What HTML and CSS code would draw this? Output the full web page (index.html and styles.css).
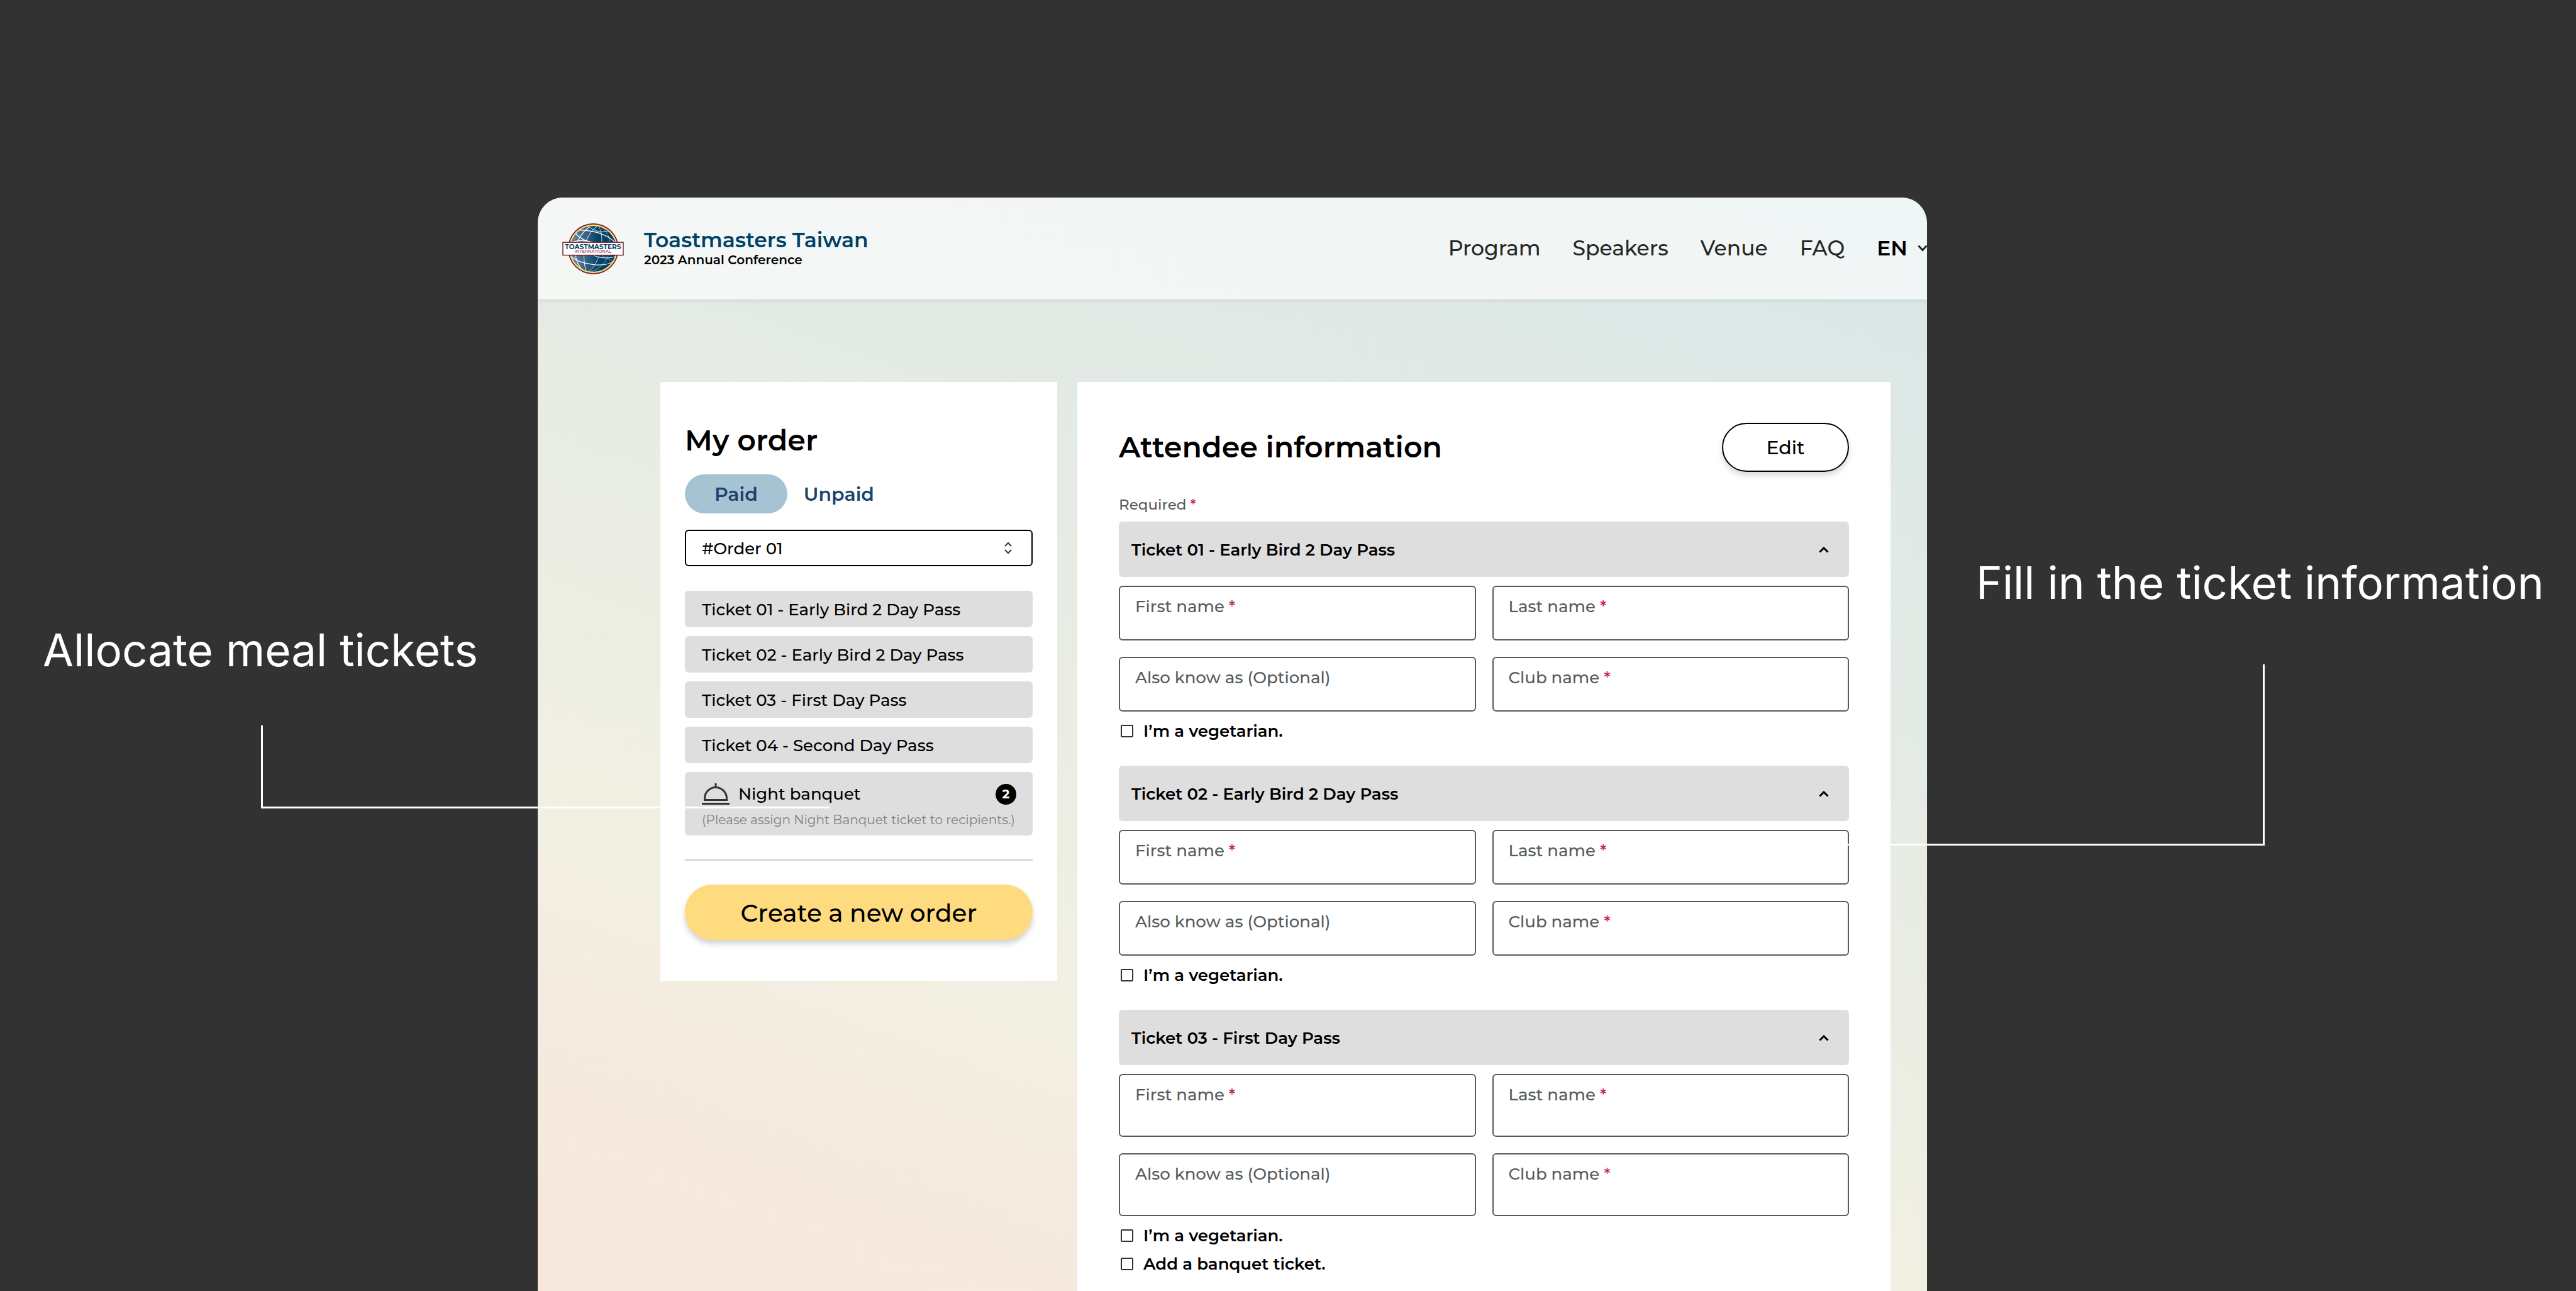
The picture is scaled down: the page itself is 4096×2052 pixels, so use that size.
FILE: index.html
```html
<!DOCTYPE html>
<html lang="en">
<head>
<meta charset="utf-8">
<meta name="viewport" content="width=device-width, initial-scale=1">
<title>Toastmasters Taiwan – My order</title>
<link rel="stylesheet" href="styles.css">
</head>
<body>
<div class="scene">
  <aside class="note note-left">
    <p class="caption">Allocate meal tickets</p>
    <div class="connector connector-left"></div>
  </aside>

  <div class="window">
    <header class="topbar">
      <a class="brand" href="#">
        <svg class="logo" viewBox="0 0 397 330" role="img" aria-label="Toastmasters International">
          <defs>
            <linearGradient id="globe" x1="0" y1="0" x2="1" y2="0">
              <stop offset="0" stop-color="#6f8ca6"/>
              <stop offset=".3" stop-color="#3c6688"/>
              <stop offset=".6" stop-color="#064467"/>
              <stop offset="1" stop-color="#003e62"/>
            </linearGradient>
            <clipPath id="disc"><circle cx="200" cy="165" r="149"/></clipPath>
          </defs>
          <circle cx="200" cy="165" r="165" fill="#7a1f31"/>
          <circle cx="200" cy="165" r="158" fill="#f7dd74"/>
          <circle cx="200" cy="165" r="149" fill="url(#globe)"/>
          <g clip-path="url(#disc)" fill="none" stroke="#fff">
            <path stroke-width="5" d="M175 22C125 60 90 110 84 180C82 240 110 290 150 320"/>
            <path stroke-width="4" d="M232 14C180 50 150 100 142 170C136 230 142 280 158 318"/>
            <path stroke-width="3" d="M232 14C262 60 260 130 244 190C226 250 200 290 166 316"/>
            <path stroke-width="2" d="M236 14C300 50 320 120 306 180C290 250 240 300 176 318"/>
            <path stroke-width="5" d="M80 48C110 40 200 46 260 72C310 92 345 120 352 150"/>
            <path stroke-width="6" d="M84 60C100 90 150 118 220 132"/>
            <path stroke-width="6" d="M44 132C100 100 180 112 226 134"/>
            <path stroke-width="3" d="M172 20C190 42 240 60 290 54"/>
            <path stroke-width="2" d="M150 36C200 62 270 62 300 46"/>
            <path stroke-width="5" d="M52 212C90 244 150 262 210 268C270 272 310 262 330 246"/>
            <path stroke-width="4" d="M200 206C240 226 300 232 350 212"/>
            <path stroke-width="2" d="M250 206C300 226 330 250 336 262"/>
          </g>
          <rect x="3" y="123" width="391" height="83" fill="#fff" stroke="#7a1f31" stroke-width="6"/>
          <text class="logo-name" x="198" y="165" text-anchor="middle">TOASTMASTERS</text>
          <text class="logo-sub" x="198" y="191" text-anchor="middle">INTERNATIONAL</text>
        </svg>
        <span class="brand-text">
          <span class="brand-name">Toastmasters Taiwan</span>
          <span class="brand-event">2023 Annual Conference</span>
        </span>
      </a>
      <nav class="nav">
        <a href="#">Program</a>
        <a href="#">Speakers</a>
        <a href="#">Venue</a>
        <a href="#">FAQ</a>
        <button class="lang" type="button">EN
          <svg class="lang-arrow" viewBox="0 0 15 11" aria-hidden="true"><path d="M1.5 1.5L8 8.500L14.500 1.500"/></svg>
        </button>
      </nav>
    </header>

    <main class="content">
      <section class="card order">
        <h2 class="title">My order</h2>
        <div class="tabs">
          <button class="tab tab-active" type="button">Paid</button>
          <button class="tab" type="button">Unpaid</button>
        </div>
        <div class="select-wrap">
          <select class="select" aria-label="Order"><option>#Order 01</option></select>
          <svg class="select-arrows" viewBox="0 0 12 20" aria-hidden="true"><path d="M1 7L6 2L11 7M1 13L6 18L11 13"/></svg>
        </div>
        <ul class="tickets">
          <li><button class="ticket" type="button">Ticket 01 - Early Bird 2 Day Pass</button></li>
          <li><button class="ticket" type="button">Ticket 02 - Early Bird 2 Day Pass</button></li>
          <li><button class="ticket" type="button">Ticket 03 - First Day Pass</button></li>
          <li><button class="ticket" type="button">Ticket 04 - Second Day Pass</button></li>
          <li>
            <button class="ticket banquet" type="button">
              <span class="banquet-row">
                <svg class="dish" viewBox="0 0 44 34" aria-hidden="true"><path d="M22 0V7M4.500 26.500V24A17.500 17.500 0 0 1 39.500 24V26.500ZM0 32.500H44"/></svg>
                <span>Night banquet</span>
                <span class="badge">2</span>
              </span>
              <span class="banquet-hint">(Please assign Night Banquet ticket to recipients.)</span>
            </button>
          </li>
        </ul>
        <hr class="rule">
        <button class="create" type="button">Create a new order</button>
      </section>

      <form class="card attendee">
        <div class="attendee-head">
          <h2 class="title">Attendee information</h2>
          <button class="edit" type="button">Edit</button>
        </div>
        <p class="required">Required <span class="star">*</span></p>

        <section class="group">
          <button class="group-bar" type="button">Ticket 01 - Early Bird 2 Day Pass
            <svg class="caret" viewBox="0 0 16 10" aria-hidden="true"><path d="M1.500 8.500L8 2L14.500 8.500"/></svg>
          </button>
          <div class="fields">
            <label class="field"><span>First name <span class="star">*</span></span><input type="text"></label>
            <label class="field"><span>Last name <span class="star">*</span></span><input type="text"></label>
            <label class="field"><span>Also know as (Optional)</span><input type="text"></label>
            <label class="field"><span>Club name <span class="star">*</span></span><input type="text"></label>
          </div>
          <div class="checks">
            <label class="check"><input type="checkbox">I’m a vegetarian.</label>
          </div>
        </section>

        <section class="group">
          <button class="group-bar" type="button">Ticket 02 - Early Bird 2 Day Pass
            <svg class="caret" viewBox="0 0 16 10" aria-hidden="true"><path d="M1.500 8.500L8 2L14.500 8.500"/></svg>
          </button>
          <div class="fields">
            <label class="field"><span>First name <span class="star">*</span></span><input type="text"></label>
            <label class="field"><span>Last name <span class="star">*</span></span><input type="text"></label>
            <label class="field"><span>Also know as (Optional)</span><input type="text"></label>
            <label class="field"><span>Club name <span class="star">*</span></span><input type="text"></label>
          </div>
          <div class="checks">
            <label class="check"><input type="checkbox">I’m a vegetarian.</label>
          </div>
        </section>

        <section class="group">
          <button class="group-bar" type="button">Ticket 03 - First Day Pass
            <svg class="caret" viewBox="0 0 16 10" aria-hidden="true"><path d="M1.500 8.500L8 2L14.500 8.500"/></svg>
          </button>
          <div class="fields fields-tall">
            <label class="field"><span>First name <span class="star">*</span></span><input type="text"></label>
            <label class="field"><span>Last name <span class="star">*</span></span><input type="text"></label>
            <label class="field"><span>Also know as (Optional)</span><input type="text"></label>
            <label class="field"><span>Club name <span class="star">*</span></span><input type="text"></label>
          </div>
          <div class="checks">
            <label class="check"><input type="checkbox">I’m a vegetarian.</label>
            <label class="check"><input type="checkbox">Add a banquet ticket.</label>
          </div>
        </section>
      </form>
    </main>
  </div>

  <aside class="note note-right">
    <p class="caption">Fill in the ticket information</p>
    <div class="connector connector-right"></div>
  </aside>
</div>
</body>
</html>
```
FILE: styles.css
```css
*,
*::before,
*::after {
  box-sizing: border-box;
}

body {
  margin: 0;
  background: #323232;
  color: #000;
  font-family: Montserrat, Inter, "Noto Sans", sans-serif;
  font-size: 26px;
  font-weight: 500;
  line-height: 32px;
}

button,
input,
select {
  font: inherit;
  color: inherit;
}

button {
  border: 0;
  background: none;
  cursor: pointer;
}

h2,
p,
ul {
  margin: 0;
  padding: 0;
}

a {
  color: inherit;
  text-decoration: none;
}

.scene {
  display: grid;
  grid-template-columns: 855fr 2209fr 1032fr;
  min-height: 100vh;
  overflow: hidden;
}

/* Side notes and the lines that lead into the window */

.note {
  position: relative;
  z-index: 1;
  min-width: 0;
  pointer-events: none;
}

.note-left {
  padding: 989px 0 0 68px;
}

.note-right {
  padding: 882px 0 0 78px;
}

.caption {
  color: #fff;
  font-family: Inter, sans-serif;
  font-size: 71px;
  font-weight: 400;
  line-height: 88px;
  white-space: nowrap;
}

.connector {
  border: 0 solid #fff;
}

.connector-left {
  width: 904px;
  height: 132px;
  margin: 76px 0 0 347px;
  border-width: 0 0 3px 3px;
}

.connector-right {
  width: 701px;
  height: 288px;
  margin: 86px 0 0 -242px;
  border-width: 0 3px 3px 0;
}

/* Window */

.window {
  display: flex;
  flex-direction: column;
  min-width: 0;
  margin-top: 314px;
  overflow: hidden;
  border-radius: 40px 40px 0 0;
  background: linear-gradient(200deg, #d9e7e8 0%, #e6ebe4 40%, #f2f0e2 71%, #f5eadf 83%, #f7e7dc 100%);
}

.topbar {
  display: flex;
  align-items: center;
  justify-content: space-between;
  height: 162px;
  padding-left: 39px;
  background: rgba(255, 255, 255, 0.6);
  box-shadow: 0 3px 6px rgba(0, 0, 0, 0.07);
}

.brand {
  display: flex;
  align-items: center;
  gap: 32px;
}

.logo {
  width: 98px;
  height: 81px;
}

.logo-name {
  fill: #0a4266;
  font-size: 43px;
  font-weight: 700;
}

.logo-sub {
  fill: #8c3040;
  font-size: 28px;
  font-weight: 500;
}

.brand-text {
  display: flex;
  flex-direction: column;
  padding-bottom: 4px;
}

.brand-name {
  color: #004165;
  font-size: 33px;
  font-weight: 600;
  line-height: 40px;
}

.brand-event {
  font-size: 20px;
  font-weight: 600;
  line-height: 24px;
}

.nav {
  display: flex;
  align-items: center;
  gap: 51px;
  padding-bottom: 2px;
  color: #262626;
  font-size: 33px;
  line-height: 40px;
}

.lang {
  display: flex;
  align-items: center;
  gap: 16px;
  padding: 0;
  color: #000;
  font-weight: 600;
}

.lang-arrow {
  width: 15px;
  height: 11px;
  fill: none;
  stroke: #262626;
  stroke-width: 3;
}

.content {
  display: grid;
  flex: 1;
  grid-template-columns: 631fr 1293fr;
  gap: 32px;
  padding: 131px 58px 0 195px;
}

.card {
  min-width: 0;
  background: #fff;
}

.title {
  font-size: 46px;
  font-weight: 600;
  line-height: 56px;
}

/* Order card */

.order {
  align-self: start;
  padding: 65px 39px;
}

.tabs {
  display: flex;
  gap: 26px;
  margin: 26px 0;
}

.tab {
  padding: 13px 0 11px;
  color: #1b4269;
  font-size: 30px;
  font-weight: 600;
  line-height: 38px;
}

.tab-active {
  padding-right: 47px;
  padding-left: 47px;
  border-radius: 31px;
  background: #a6c3d4;
}

.select-wrap {
  display: grid;
  align-items: center;
  margin-bottom: 39px;
}

.select-wrap > * {
  grid-area: 1 / 1;
}

.select {
  width: 100%;
  height: 58px;
  padding: 2px 48px 0 25px;
  appearance: none;
  border: 2px solid #000;
  border-radius: 6px;
  background: #fff;
}

.select-arrows {
  width: 12px;
  height: 20px;
  margin-right: 33px;
  justify-self: end;
  fill: none;
  stroke: #333;
  stroke-width: 2;
  pointer-events: none;
}

.tickets {
  display: grid;
  gap: 14px;
  list-style: none;
}

.ticket {
  display: block;
  width: 100%;
  padding: 14px 26px 12px 27px;
  border-radius: 6px;
  background: #dedede;
  text-align: left;
}

.banquet {
  padding: 18px 26px 11px 27px;
}

.banquet-row {
  display: flex;
  align-items: center;
  gap: 14px;
  height: 34px;
}

.dish {
  width: 44px;
  height: 34px;
  fill: none;
  stroke: #333;
  stroke-width: 3;
}

.badge {
  width: 33px;
  height: 33px;
  margin-left: auto;
  border-radius: 50%;
  background: #000;
  color: #fff;
  font-size: 20px;
  font-weight: 700;
  line-height: 33px;
  text-align: center;
}

.banquet-hint {
  display: block;
  margin-top: 10px;
  color: #808080;
  font-size: 20px;
  font-weight: 400;
  line-height: 28px;
  white-space: nowrap;
}

.rule {
  height: 2px;
  margin: 38px 0;
  border: 0;
  background: #ccc;
}

.create {
  display: block;
  width: 100%;
  height: 88px;
  padding: 2px 0 0;
  border-radius: 44px;
  background: #ffdb80;
  box-shadow: 0 6px 10px rgba(0, 0, 0, 0.18);
  font-size: 39px;
}

/* Attendee form */

.attendee {
  padding: 65px 66px 0;
}

.attendee-head {
  display: flex;
  align-items: center;
  justify-content: space-between;
}

.edit {
  width: 202px;
  height: 78px;
  padding: 2px 0 0;
  border: 2px solid #000;
  border-radius: 39px;
  background: #fff;
  box-shadow: 0 6px 10px rgba(0, 0, 0, 0.15);
  font-size: 30px;
}

.required {
  margin: 36px 0 11px;
  color: #565b5d;
  font-size: 23px;
}

.star {
  color: #c0224f;
}

.group {
  margin-bottom: 39px;
}

.group-bar {
  display: flex;
  align-items: center;
  justify-content: space-between;
  width: 100%;
  height: 88px;
  padding: 2px 32px 0 20px;
  border-radius: 6px;
  background: #dedede;
  font-weight: 600;
}

.caret {
  width: 16px;
  height: 10px;
  fill: none;
  stroke: #000;
  stroke-width: 3;
}

.fields {
  display: grid;
  grid-template-columns: 1fr 1fr;
  grid-auto-rows: 87px;
  gap: 26px;
  margin: 14px 0 15px;
}

.fields-tall {
  grid-auto-rows: 100px;
}

.field {
  display: flex;
  flex-direction: column;
  padding: 15px 24px 0;
  border: 2px solid #565b5d;
  border-radius: 6px;
  background: #fff;
  color: #565b5d;
}

.field input {
  flex: 1;
  width: 100%;
  min-height: 0;
  padding: 0;
  border: 0;
  outline: 0;
  background: none;
}

.checks {
  display: grid;
  gap: 13px;
}

.check {
  display: flex;
  align-items: center;
  gap: 16px;
  padding-left: 3px;
  font-weight: 600;
}

.check input {
  width: 20px;
  height: 20px;
  margin: 0;
  appearance: none;
  border: 2px solid #333;
  border-radius: 2px;
  background: #fff;
}
```
